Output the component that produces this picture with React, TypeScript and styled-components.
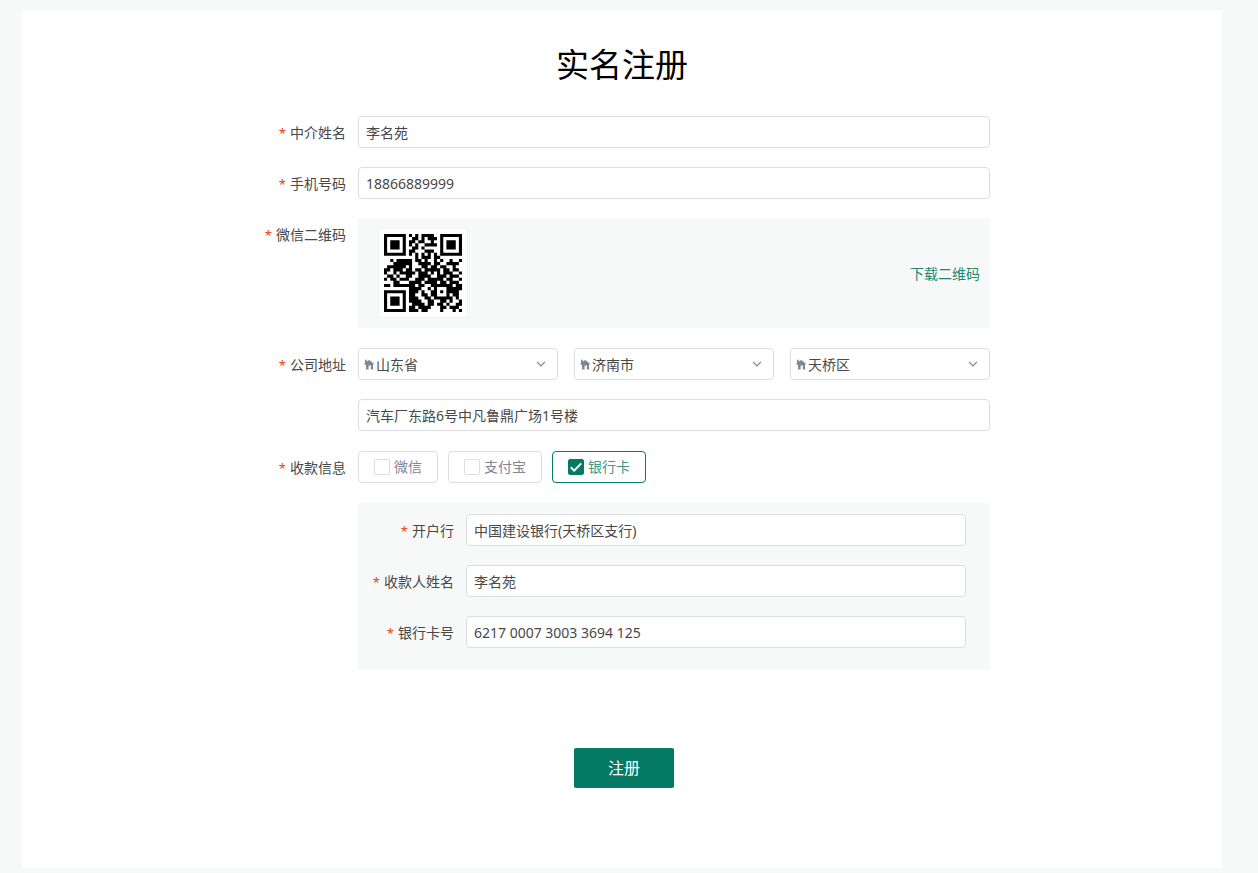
import React from "react";
import styled, { createGlobalStyle, css } from "styled-components";

const GlobalStyle = createGlobalStyle`
  *, *::before, *::after { box-sizing: border-box; }
  body {
    margin: 0;
    background: #f7f9f8;
    color: #484848;
    font: 14px/32px "Noto Sans", "Noto Sans CJK SC", sans-serif;
  }
  input, select, button { font: inherit; color: inherit; }
`;

const Page = styled.main`
  margin: 10px 36px 5px 22px;
  padding: 35px 20px 80px;
  background: #fff;
`;

const Title = styled.h1`
  margin: 0 0 31px;
  text-align: center;
  font-size: 33px;
  line-height: 40px;
  font-weight: 400;
  color: #000;
`;

const Form = styled.form`
  width: 100%;
  max-width: 740px;
  margin: 0 auto;
  padding-right: 2px;
`;

const Row = styled.div<{ $labelWidth?: number; $gap?: number }>`
  display: grid;
  grid-template-columns: ${(p) => p.$labelWidth ?? 106}px minmax(0, 1fr);
  margin-bottom: ${(p) => p.$gap ?? 19}px;
`;

const labelText = css`
  padding-right: 12px;
  text-align: right;
  line-height: 34px;
  height: 32px;
  white-space: nowrap;
  &::before {
    content: "*";
    margin-right: 4px;
    font-size: 13px;
    color: #ed4014;
  }
`;

const Label = styled.label`
  ${labelText}
`;

const GroupLabel = styled.span`
  ${labelText}
`;

const TextBox = styled.input`
  display: block;
  width: 100%;
  height: 32px;
  padding: 2px 7px 0;
  border: 1px solid #dcdee2;
  border-radius: 4px;
  background: #fff;
  outline: none;
`;

const CodePanel = styled.div`
  display: flex;
  align-items: center;
  justify-content: space-between;
  height: 110px;
  padding: 0 10px 0 20px;
  background: #f7f9f8;
`;

const CodeFrame = styled.div`
  width: 90px;
  height: 90px;
  padding: 5px;
  border: 1px solid #f0f2f1;
  background: #fff;
  svg { display: block; }
`;

const DownloadLink = styled.a`
  padding-top: 2px;
  color: #1a8872;
  text-decoration: none;
`;

const Address = styled.div`
  display: grid;
  gap: 19px 16px;
  grid-template-columns: repeat(3, minmax(0, 1fr));
`;

const FullLine = styled.div`
  grid-column: 1 / -1;
`;

const SelectBox = styled.div`
  display: grid;
  align-items: center;
  height: 32px;
  border: 1px solid #dcdee2;
  border-radius: 4px;
  > * { grid-area: 1 / 1; }
  > svg { pointer-events: none; }
`;

const Select = styled.select`
  width: 100%;
  height: 30px;
  padding: 0 24px 0 17px;
  border: 0;
  background: transparent;
  appearance: none;
  outline: none;
`;

const HomeIcon = styled.svg`
  margin-left: 5px;
`;

const ChevronIcon = styled.svg`
  justify-self: end;
  margin-right: 11px;
`;

const Options = styled.div`
  display: flex;
  gap: 10px;
`;

const Option = styled.label`
  display: flex;
  align-items: center;
  gap: 4px;
  height: 32px;
  padding: 0 15px;
  border: 1px solid #dcdee2;
  border-radius: 4px;
  color: #808695;
  white-space: nowrap;
  &:has(input:checked) {
    border-color: #047a64;
    color: #3b9a87;
  }
`;

const CheckFrame = styled.span`
  display: grid;
  width: 16px;
  height: 16px;
  > * { grid-area: 1 / 1; }
  > svg { pointer-events: none; }
`;

const CheckBox = styled.input`
  width: 16px;
  height: 16px;
  margin: 0;
  appearance: none;
  border: 1px solid #dcdee2;
  border-radius: 2px;
  background: #fff;
  &:checked {
    border-color: #047a64;
    background: #047a64;
  }
`;

const BankPanel = styled.div`
  margin-left: 106px;
  padding: 11px 24px 22px 0;
  background: #f7f9f8;
  > :last-child { margin-bottom: 0; }
`;

const Submit = styled.button`
  display: block;
  width: 100px;
  height: 40px;
  margin: 78px auto 0;
  padding: 0;
  border: 0;
  border-radius: 2px;
  background: #047a64;
  color: #fff;
  font-size: 16px;
  line-height: 40px;
`;

const SubmitArea = styled.div`
  padding-left: 6px;
`;

const MODULES = [
  "1111111010101111001111111",
  "1000001001101011101000001",
  "1011101011011001001011101",
  "1011101010100111101011101",
  "1011101001101000001011101",
  "1000001011000111001000001",
  "1111111010101010101111111",
  "0000000000101110110000000",
  "0010111110110100101001001",
  "0001111110011110110011110",
  "0111111010001101101100100",
  "1101110110110111110110110",
  "1001011111011101010111001",
  "0110100110011110011101110",
  "1011011100111011111011001",
  "0001100011110111101101110",
  "1101111111011001111111011",
  "0000000011110010100011111",
  "1111111011101001101011110",
  "1000001011001101100010110",
  "1011101011100110111111010",
  "1011101011110011001101001",
  "1011101001111011011010011",
  "1000001011011110001101110",
  "1111111011101100001000101",
];

const codePath = MODULES.map((line, y) =>
  [...line].map((cell, x) => (cell === "1" ? `M${x} ${y}h1v1h-1z` : "")).join("")
).join("");

const QrCode = () => (
  <CodeFrame>
    <svg width="78" height="78" viewBox="0 0 25 25" role="img" aria-label="微信二维码">
      <path d={codePath} fill="#000" />
    </svg>
  </CodeFrame>
);

const Region = ({ label, value }: { label: string; value: string }) => (
  <SelectBox>
    <Select aria-label={label} defaultValue={value}>
      <option>{value}</option>
    </Select>
    <HomeIcon width="11" height="11" viewBox="0 0 11 11" aria-hidden="true">
      <path
        d="M1 .8h1.7v1.8L5.3 1 10 4.8l-.5.8-.5-.3V10.4H6.8V6.6H4.6v3.8H2V5.4L.6 6 .2 5.1 1 4.2z"
        fill="#808695"
      />
    </HomeIcon>
    <ChevronIcon width="10" height="6" viewBox="0 0 10 6" aria-hidden="true">
      <path d="M1 .8l4 4 4-4" fill="none" stroke="#808695" strokeWidth="1.2" />
    </ChevronIcon>
  </SelectBox>
);

const Payment = ({ name, checked }: { name: string; checked?: boolean }) => (
  <Option>
    <CheckFrame>
      <CheckBox type="checkbox" defaultChecked={checked} />
      {checked && (
        <svg width="16" height="16" viewBox="0 0 16 16" aria-hidden="true">
          <path d="M2.8 8.2l3.4 3.4 7-7.2" fill="none" stroke="#fff" strokeWidth="2" />
        </svg>
      )}
    </CheckFrame>
    {name}
  </Option>
);

type FieldProps = { id: string; label: string; value: string; labelWidth?: number };

const Field = ({ id, label, value, labelWidth }: FieldProps) => (
  <Row $labelWidth={labelWidth}>
    <Label htmlFor={id}>{label}</Label>
    <TextBox id={id} defaultValue={value} />
  </Row>
);

export default function App() {
  return (
    <>
      <GlobalStyle />
      <Page>
        <Title>实名注册</Title>
        <Form onSubmit={(e) => e.preventDefault()}>
          <Field id="agent" label="中介姓名" value="李名苑" />
          <Field id="phone" label="手机号码" value="18866889999" />
          <Row $gap={20}>
            <GroupLabel>微信二维码</GroupLabel>
            <CodePanel>
              <QrCode />
              <DownloadLink href="#qr">下载二维码</DownloadLink>
            </CodePanel>
          </Row>
          <Row $gap={20}>
            <GroupLabel>公司地址</GroupLabel>
            <Address>
              <Region label="省份" value="山东省" />
              <Region label="城市" value="济南市" />
              <Region label="区县" value="天桥区" />
              <FullLine>
                <TextBox aria-label="详细地址" defaultValue="汽车厂东路6号中凡鲁鼎广场1号楼" />
              </FullLine>
            </Address>
          </Row>
          <Row $gap={20}>
            <GroupLabel>收款信息</GroupLabel>
            <Options>
              <Payment name="微信" />
              <Payment name="支付宝" />
              <Payment name="银行卡" checked />
            </Options>
          </Row>
          <BankPanel>
            <Field id="bank" label="开户行" value="中国建设银行(天桥区支行)" labelWidth={108} />
            <Field id="payee" label="收款人姓名" value="李名苑" labelWidth={108} />
            <Field id="card" label="银行卡号" value="6217 0007 3003 3694 125" labelWidth={108} />
          </BankPanel>
          <SubmitArea>
            <Submit type="submit">注册</Submit>
          </SubmitArea>
        </Form>
      </Page>
    </>
  );
}
